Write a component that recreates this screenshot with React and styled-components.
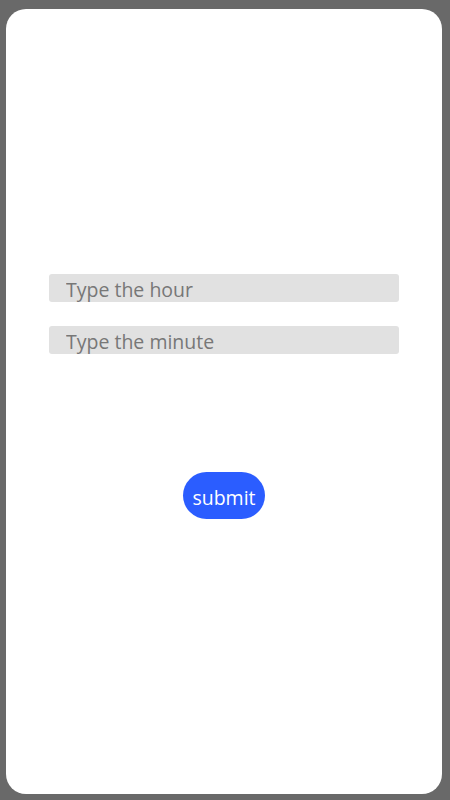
import React from "react";
import styled, { createGlobalStyle } from "styled-components";

const Global = createGlobalStyle`
  html, body { margin: 0; padding: 0; background: #696969; }
  body { font-family: "Open Sans", "Noto Sans", sans-serif; }
  * { box-sizing: border-box; }
`;

const Screen = styled.div`
  width: 450px;
  height: 800px;
  padding: 9px 8px 6px 6px;
  background: #696969;
`;

const Card = styled.div`
  height: 100%;
  background: #ffffff;
  border-radius: 20px;
  display: flex;
  flex-direction: column;
  align-items: center;
  padding-top: 265px;
`;

const Form = styled.div`
  width: 350px;
  display: flex;
  flex-direction: column;
  gap: 24px;
`;

const Input = styled.input`
  width: 100%;
  height: 28px;
  border: none;
  border-radius: 3px;
  background: #e1e1e1;
  padding: 3px 0 0 17px;
  font-family: "Open Sans", "Noto Sans", sans-serif;
  font-size: 19.5px;
  color: #333;
  outline: none;
  &::placeholder { color: #777777; }
`;

const Button = styled.button`
  margin-top: 118px;
  width: 82px;
  height: 47px;
  border: none;
  border-radius: 24px;
  background: #2b5dff;
  color: #ffffff;
  font-family: "Open Sans", "Noto Sans", sans-serif;
  font-size: 19.5px;
  padding: 3px 0 0;
`;

export default function App() {
  return (
    <>
      <Global />
      <Screen>
        <Card>
          <Form>
            <Input placeholder="Type the hour" />
            <Input placeholder="Type the minute" />
          </Form>
          <Button>submit</Button>
        </Card>
      </Screen>
    </>
  );
}
